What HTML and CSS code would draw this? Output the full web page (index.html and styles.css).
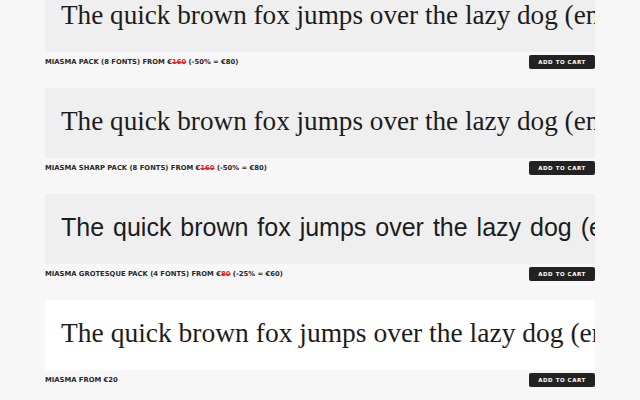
FILE: index.html
```html
<!DOCTYPE html>
<html>
<head>
<meta charset="utf-8">
<link rel="stylesheet" href="styles.css">
</head>
<body>
<div class="list">
  <div class="item">
    <div class="sample f-regular">The quick brown fox jumps over the lazy dog (en)</div>
    <div class="meta">
      <span class="label">Miasma Pack (8 fonts) from €<s class="old">160</s> (-50% = €80)</span>
      <button class="cart">Add to cart</button>
    </div>
  </div>
  <div class="item">
    <div class="sample f-sharp">The quick brown fox jumps over the lazy dog (en)</div>
    <div class="meta">
      <span class="label">Miasma Sharp Pack (8 fonts) from €<s class="old">160</s> (-50% = €80)</span>
      <button class="cart">Add to cart</button>
    </div>
  </div>
  <div class="item">
    <div class="sample f-grotesque">The quick brown fox jumps over the lazy dog (en)</div>
    <div class="meta">
      <span class="label">Miasma Grotesque Pack (4 fonts) from €<s class="old">80</s> (-25% = €60)</span>
      <button class="cart">Add to cart</button>
    </div>
  </div>
  <div class="item">
    <div class="sample f-single active">The quick brown fox jumps over the lazy dog (en)</div>
    <div class="meta">
      <span class="label">Miasma from €20</span>
      <button class="cart">Add to cart</button>
    </div>
  </div>
</div>
</body>
</html>
```
FILE: styles.css
```css
html, body {
  margin: 0;
  padding: 0;
  background: #f7f7f7;
  height: 400px;
  overflow: hidden;
}
.list {
  display: flex;
  flex-direction: column;
  gap: 19px;
  margin: -18px 45px 0 45px;
}
.item {
  display: flex;
  flex-direction: column;
  gap: 3px;
}
.sample {
  height: 70px;
  box-sizing: border-box;
  background: #efefef;
  color: #1c1c1c;
  padding: 15px 0 0 16px;
  font-size: 27.2px;
  line-height: 36px;
  white-space: nowrap;
  overflow: hidden;
}
.sample.active { background: #ffffff; }
.f-regular { font-family: "Liberation Serif", serif; }
.f-sharp { font-family: "Liberation Serif", serif; }
.f-grotesque { font-family: "Liberation Sans", sans-serif; font-size: 25px; word-spacing: 0.08em; }
.f-single { font-family: "Liberation Serif", serif; font-size: 27.5px; }
.meta {
  display: flex;
  justify-content: space-between;
  align-items: center;
  height: 14px;
}
.label {
  font-family: "DejaVu Sans", sans-serif;
  font-weight: bold;
  font-size: 6.8px;
  letter-spacing: 0;
  text-transform: uppercase;
  color: #2a2a2a;
}
.old {
  color: #e8232a;
  text-decoration: line-through;
}
.cart {
  width: 66px;
  height: 14px;
  border: 0;
  border-radius: 2px;
  background: #222222;
  color: #ffffff;
  font-family: "DejaVu Sans", sans-serif;
  font-weight: bold;
  font-size: 5.5px;
  letter-spacing: 0.1em;
  text-transform: uppercase;
  padding: 0;
}
```
